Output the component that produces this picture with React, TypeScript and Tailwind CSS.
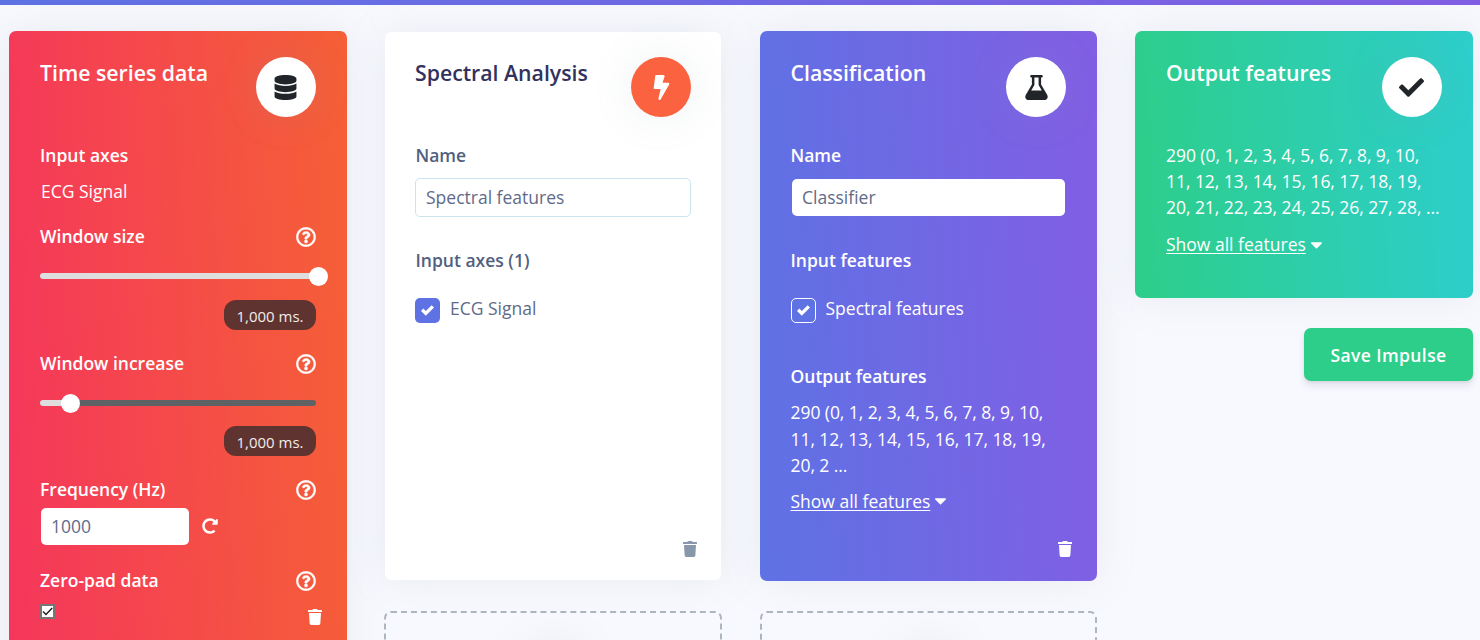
import React from "react";
import { FaDatabase, FaBolt, FaCheck, FaTrash, FaCaretDown, FaRedoAlt, FaRegQuestionCircle } from "react-icons/fa";

const cardBase =
  "flex flex-col rounded-[7px] px-[31px] pt-[26px] shadow-[0_0_40px_rgba(136,152,170,0.15)]";

function Header({ title, dark, icon, color = "bg-white text-[#212529]" }: { title: string; dark?: boolean; icon: React.ReactNode; color?: string }) {
  return (
    <div className="flex h-[60px] shrink-0 items-start justify-between">
      <h5 className={`whitespace-nowrap text-[21.25px] leading-[32px] font-semibold ${dark ? "text-[#32325d]" : "text-white"}`}>{title}</h5>
      <div className={`flex size-[60px] shrink-0 items-center justify-center rounded-full text-[25px] shadow-[0_0_40px_rgba(136,152,170,0.15)] ${color}`}>{icon}</div>
    </div>
  );
}

function Flask() {
  return (
    <svg viewBox="0 0 25 25" className="size-[25px]" fill="currentColor">
      <path
        fillRule="evenodd"
        d="M7.3 0h10.4c.8 0 1.1.6 1.1 1.3s-.3 1.2-1.1 1.2h-.6v7l5.900 10c1.600 2.800.300 5.500-2.600 5.500H4.600C1.700 25 .4 22.300 2 19.500l5.900-10v-7h-.6c-.8 0-1.100-.5-1.100-1.200S6.500 0 7.300 0ZM10.400 2.500V10L7.200 15.600h10.600L14.600 10V2.500Z"
      />
    </svg>
  );
}

function Label({ children, className = "" }: { children: React.ReactNode; className?: string }) {
  return <div className={`h-[26px] whitespace-nowrap text-[17.5px] leading-[24px] font-semibold ${className}`}>{children}</div>;
}

function LabelRow({ label }: { label: string }) {
  return (
    <div className="flex h-[26px] justify-between">
      <Label>{label}</Label>
      <FaRegQuestionCircle className="mt-[3px] size-[20px] stroke-current" strokeWidth={10} />
    </div>
  );
}

function Slider({ percent }: { percent: number }) {
  return (
    <div className="relative h-[6px] rounded-[3px] bg-[#5e6265]">
      <div className="h-[6px] rounded-[3px] bg-[#dedede]" style={{ width: `${percent}%` }} />
      <div className="absolute top-[-6px] size-[19px] rounded-full bg-white" style={{ left: `calc(${percent}% - 7px)` }} />
    </div>
  );
}

function Pill() {
  return (
    <div className="flex h-[30px] w-[92px] items-center justify-center self-end rounded-[12px] bg-[#5f332f] pt-[3px] text-[15px] text-[#f3ecea]">
      1,000 ms.
    </div>
  );
}

function ShowAll() {
  return (
    <div className="flex h-[26px] items-center gap-px whitespace-nowrap text-[17.5px] leading-[26px]">
      <span className="underline underline-offset-[2px]">Show all features</span>
      <FaCaretDown className="text-[19px]" />
    </div>
  );
}

function CheckRow({ label, box }: { label: string; box: string }) {
  return (
    <div className="flex h-[29px] items-start gap-[10px]">
      <span className={`mt-[2px] flex size-[25px] items-center justify-center rounded-[5px] bg-[#5e72e4] ${box}`}>
        <svg viewBox="0 0 8 8" className="size-[13px]" fill="#fff">
          <path d="M6.564.75l-3.59 3.612-1.538-1.55L0 4.26 2.974 7.25 8 2.193z" />
        </svg>
      </span>
      <span className="text-[17.5px] leading-[24px]">{label}</span>
    </div>
  );
}

function AddBlock() {
  return (
    <div className="flex h-[200px] justify-center rounded-[7px] border-2 border-dashed border-[#adb5bd] bg-[#f8f9fe] pt-[27px]">
      <div className="size-[60px] rounded-full shadow-[0_0_40px_rgba(136,152,170,0.15)]" />
    </div>
  );
}

export default function App() {
  return (
    <div className="h-[640px] w-[1480px] overflow-hidden bg-[#f8f9fe] font-['Open_Sans',sans-serif]">
      <div className="h-[5px] bg-[linear-gradient(87deg,#5e72e4,#825ee4)]" />
      <div className="flex items-start pt-[26px] pl-[9px]">
        <section className={`${cardBase} mr-[37px] h-[660px] w-[338px] shrink-0 bg-[linear-gradient(87deg,#f5365c,#f56036)] text-white`}>
          <Header title="Time series data" icon={<FaDatabase className="mr-px" />} />
          <Label className="mt-[26px]">Input axes</Label>
          <div className="mt-[10px] h-[26px] pl-px text-[17.5px] leading-[24px]">ECG Signal</div>
          <div className="h-[19px]" />
          <LabelRow label="Window size" />
          <div className="h-[23px]" />
          <Slider percent={100} />
          <div className="h-[21px]" />
          <Pill />
          <div className="h-[21px]" />
          <LabelRow label="Window increase" />
          <div className="h-[23px]" />
          <Slider percent={10} />
          <div className="h-[20px]" />
          <Pill />
          <div className="h-[21px]" />
          <LabelRow label="Frequency (Hz)" />
          <div className="mt-[5px] flex h-[37px] items-center gap-[13px]">
            <div className="ml-px h-[37px] w-[148px] rounded-[5px] bg-white px-[10px] text-[17.5px] leading-[36px] text-[#5f6b88]">1000</div>
            <FaRedoAlt className="mb-[2px] text-[16px]" />
          </div>
          <div className="h-[23px]" />
          <LabelRow label="Zero-pad data" />
          <div className="mt-[8px] flex h-[30px] justify-between">
            <span className="mt-[2px] flex size-[15px] items-center justify-center border-2 border-[#767676] bg-white">
              <svg viewBox="0 0 11 11" className="size-[11px] shrink-0" fill="none" stroke="#222" strokeWidth="1.5"><path d="M1 5.5 4 8.5 10.2 2" /></svg>
            </span>
            <FaTrash className="mt-[7px] mr-[-7px] text-[16px]" />
          </div>
        </section>

        <div className="mr-[38px] flex w-[338px] shrink-0 flex-col gap-[31px]">
          <section className="mx-px mt-px flex h-[548px] flex-col rounded-[6px] bg-white px-[30px] pt-[25px] text-[#525f7f] shadow-[0_0_40px_rgba(136,152,170,0.15)]">
            <Header title="Spectral Analysis" dark icon={<FaBolt className="ml-px" />} color="bg-[#fb6340] text-white" />
            <Label className="mt-[26px] pl-[0.5px]">Name</Label>
            <div className="mt-[9px] h-[39px] rounded-[5px] border border-[#cbe4f0] px-[10px] text-[17.5px] leading-[37px] text-[#5f6b88]">Spectral features</div>
            <Label className="mt-[31px] pl-[0.5px]">Input axes (1)</Label>
            <div className="h-[22px]" />
            <div className="text-[#5f6b88]">
              <CheckRow label="ECG Signal" box="" />
            </div>
            <FaTrash className="mt-auto mr-[-7px] mb-[23px] self-end text-[16px] text-[#8898aa]" />
          </section>
          <AddBlock />
        </div>

        <div className="mr-[38px] flex w-[337px] shrink-0 flex-col gap-[30px]">
          <section className={`${cardBase} h-[550px] bg-[linear-gradient(87deg,#5e72e4,#825ee4)] pl-[30.5px] text-white`}>
            <Header title="Classification" icon={<Flask />} />
            <Label className="mt-[26px]">Name</Label>
            <div className="mt-[10px] mr-px ml-[1.5px] h-[37px] rounded-[5px] bg-white px-[10px] text-[17.5px] leading-[37px] text-[#5f6b88]">Classifier</div>
            <Label className="mt-[32px]">Input features</Label>
            <div className="h-[22px]" />
            <CheckRow label="Spectral features" box="border border-white" />
            <Label className="mt-[39px]">Output features</Label>
            <p className="mt-[9px] w-[275px] text-[17.5px] leading-[26.5px] tracking-[-0.06px] whitespace-nowrap">290 (0, 1, 2, 3, 4, 5, 6, 7, 8, 9, 10,<br />11, 12, 13, 14, 15, 16, 17, 18, 19,<br />20, 2 ...</p>
            <div className="h-[9px]" />
            <ShowAll />
            <FaTrash className="mt-auto mr-[-7px] mb-[24px] self-end text-[16px]" />
          </section>
          <AddBlock />
        </div>

        <div className="flex w-[338px] shrink-0 flex-col">
          <section className={`${cardBase} h-[267px] bg-[linear-gradient(87deg,#2dce89,#2dcecc)] text-white`}>
            <Header title="Output features" icon={<FaCheck className="mr-px" />} />
            <p className="mt-[25px] text-[17.5px] leading-[26px] tracking-[-0.05px] whitespace-nowrap">290 (0, 1, 2, 3, 4, 5, 6, 7, 8, 9, 10,<br />11, 12, 13, 14, 15, 16, 17, 18, 19,<br />20, 21, 22, 23, 24, 25, 26, 27, 28, ...</p>
            <div className="h-[11px]" />
            <ShowAll />
          </section>
          <button className="mt-[30px] h-[53px] w-[169px] self-end rounded-[7px] bg-[#2dce89] pt-[2px] text-[17.5px] font-semibold tracking-[0.4px] text-white shadow-[0_5px_7px_rgba(50,50,93,0.11),0_1px_3px_rgba(0,0,0,0.08)]">Save Impulse</button>
        </div>
      </div>
    </div>
  );
}
